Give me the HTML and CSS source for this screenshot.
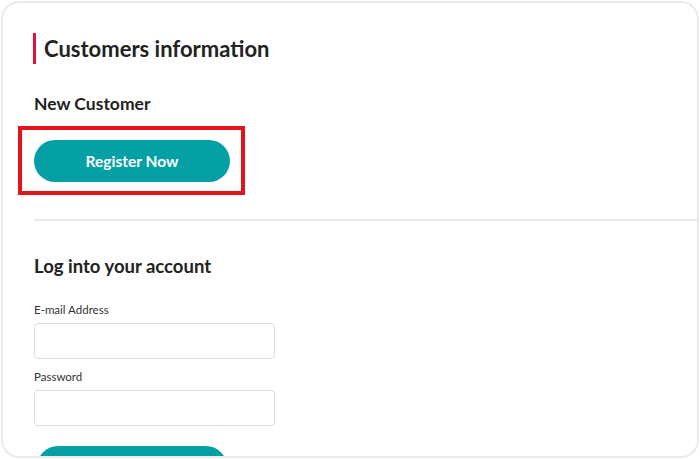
FILE: index.html
```html
<!DOCTYPE html>
<html lang="en">
<head>
<meta charset="utf-8">
<title>Customers information</title>
<link rel="stylesheet" href="styles.css">
</head>
<body>
<div class="card">
  <h1 class="title">Customers information</h1>
  <h2 class="subtitle">New Customer</h2>
  <div class="highlight-wrap">
    <button class="btn">Register Now</button>
    <span class="highlight"></span>
  </div>
  <hr class="divider">
  <h2 class="login-title">Log into your account</h2>
  <label class="label" for="email">E-mail Address</label>
  <input class="input" id="email" type="text">
  <label class="label label-2" for="pw">Password</label>
  <input class="input" id="pw" type="password">
  <button class="btn btn-login" aria-label="Log in"></button>
</div>
</body>
</html>
```
FILE: styles.css
```css
html, body {
  margin: 0;
  padding: 0;
  background: #ffffff;
}
body {
  font-family: "Lato", "Open Sans", sans-serif;
  color: #222222;
}
.card {
  box-sizing: border-box;
  margin: 1px;
  width: 698px;
  height: 457px;
  border: 2px solid #ebebeb;
  border-radius: 18px;
  overflow: hidden;
  padding: 30px 0 0 30px;
  display: flex;
  flex-direction: column;
  align-items: flex-start;
}
.card > * {
  flex-shrink: 0;
}
.title {
  margin: 0;
  font-size: 22px;
  line-height: 31px;
  font-weight: 700;
  border-left: 3px solid #e0143c;
  padding-left: 8px;
  color: #222;
}
.subtitle {
  margin: 28px 0 0 1px;
  font-size: 17.5px;
  line-height: 24px;
  font-weight: 700;
}
.highlight-wrap {
  position: relative;
  margin: 24px 0 0 1px;
}
.btn {
  display: block;
  width: 196px;
  height: 42px;
  border: none;
  border-radius: 21px;
  background: #05a0a5;
  color: #ffffff;
  font-family: "Lato", sans-serif;
  font-weight: 700;
  font-size: 15.5px;
  padding: 0;
}
.highlight {
  position: absolute;
  left: -16px;
  top: -14px;
  width: 227px;
  height: 69px;
  box-sizing: border-box;
  border: 4px solid #e3151b;
}
.divider {
  align-self: stretch;
  margin: 37px 0 0 1px;
  border: none;
  height: 2px;
  background: #e9e9e9;
}
.login-title {
  margin: 32px 0 0 1px;
  font-size: 18.5px;
  line-height: 26px;
  font-weight: 700;
}
.label {
  display: block;
  margin: 23px 0 0 1px;
  font-size: 11.5px;
  line-height: 16px;
  color: #333;
}
.label-2 {
  margin-top: 10px;
}
.input {
  box-sizing: border-box;
  margin: 5px 0 0 1px;
  width: 241px;
  height: 36px;
  border: 1.5px solid #dddddd;
  border-radius: 4px;
  background: #fff;
}
.btn-login {
  margin: 20px 0 0 4px;
  width: 190px;
}
```
